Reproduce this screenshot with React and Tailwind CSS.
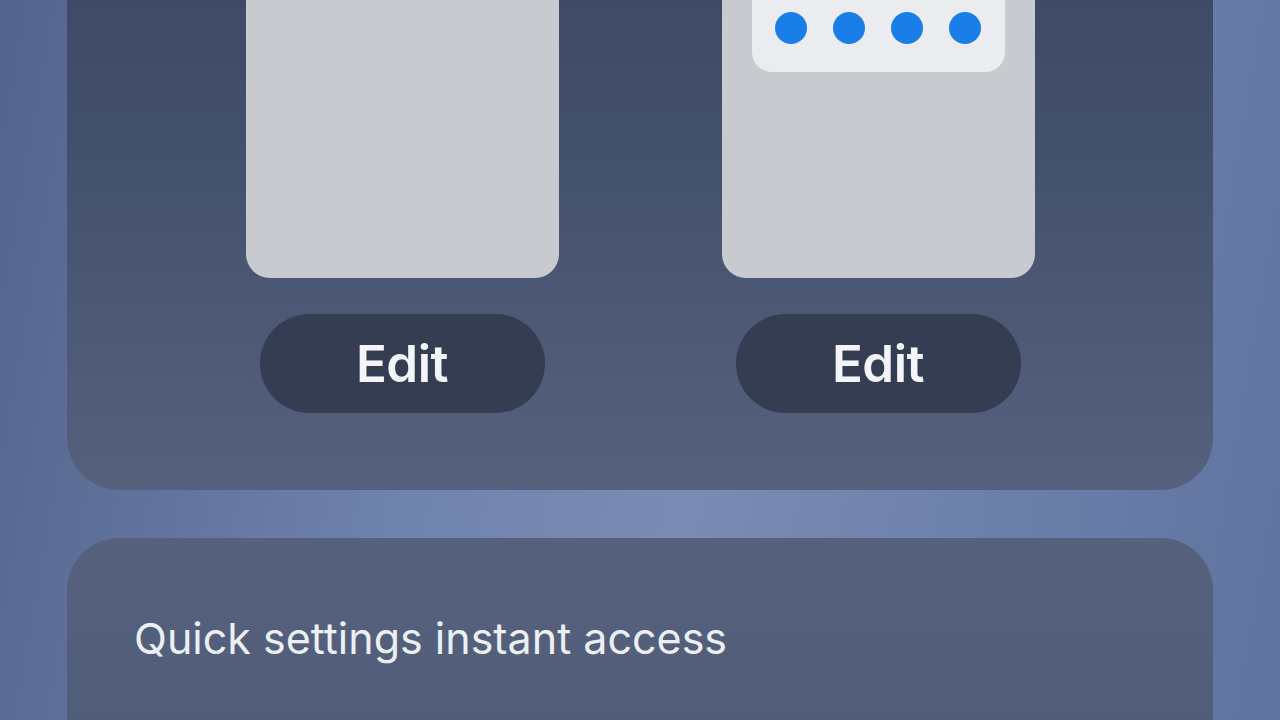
const Phone = ({ children }) => (
  <div className="w-[313px] h-[400px] rounded-[24px] bg-[#c9cacf] flex flex-col px-[30px] pt-[30px]">
    {children}
  </div>
);

const EditButton = () => (
  <button className="w-[285px] h-[99px] rounded-full bg-[#343d51] text-[#f4f5f8] text-[51px] font-semibold tracking-[-0.5px] leading-none">
    Edit
  </button>
);

export default function App() {
  return (
    <div
      className="h-[720px] w-[1280px] overflow-hidden flex flex-col gap-[48px] px-[67px] bg-[linear-gradient(100deg,#53648c_0%,#7083ad_35%,#7a8cb3_55%,#5f73a0_100%)]"
      style={{ fontFamily: "Inter, 'Noto Sans', sans-serif" }}
    >
      <div className="-mt-[160px] h-[650px] shrink-0 rounded-[52px] bg-[linear-gradient(180deg,#3b4560_0%,#43506b_45%,#56627d_100%)] flex items-end justify-center gap-[163px] pb-[77px]">
        <div className="flex flex-col items-center gap-[36px]">
          <Phone />
          <EditButton />
        </div>
        <div className="flex flex-col items-center gap-[36px]">
          <Phone>
            <div className="h-[164px] rounded-[20px] bg-[#ebecef] flex items-end justify-center gap-[26px] pb-[28px]">
              {[0, 1, 2, 3].map((i) => (
                <span key={i} className="w-[32px] h-[32px] rounded-full bg-[#1a7ee8]" />
              ))}
            </div>
          </Phone>
          <EditButton />
        </div>
      </div>
      <div className="h-[260px] shrink-0 rounded-[52px] bg-[linear-gradient(180deg,#56627d_0%,#4f5c78_100%)] px-[67px] pt-[74px]">
        <p className="text-[43px] leading-[52px] text-[#eceff4] tracking-[0px]">
          Quick settings instant access
        </p>
      </div>
    </div>
  );
}
